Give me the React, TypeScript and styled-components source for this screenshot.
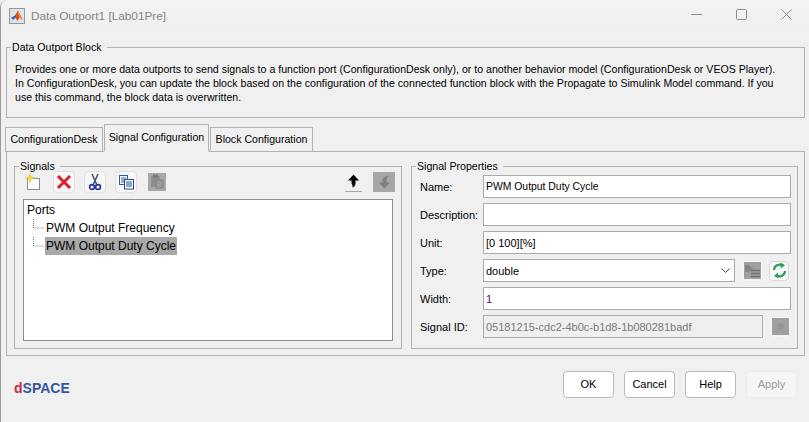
import React from "react";
import styled, { createGlobalStyle } from "styled-components";

const GlobalStyle = createGlobalStyle`
  html, body {
    margin: 0;
    padding: 0;
    background: #f0f0f0;
    overflow: hidden;
  }
  * {
    box-sizing: border-box;
  }
`;

const Win = styled.div`
  width: 809px;
  height: 422px;
  display: flex;
  flex-direction: column;
  overflow: hidden;
  background: #f0f0f0;
  border-left: 1px solid #9a9a9a;
  border-top-left-radius: 8px;
  font-family: "Liberation Sans", Arial, sans-serif;
  font-size: 10.6px;
  color: #000;
`;

const TitleBar = styled.div`
  height: 31px;
  flex: none;
  display: flex;
  align-items: center;
  padding-left: 8px;
  background: linear-gradient(#f3f3f3, #efefef);
`;

const TitleText = styled.span`
  flex: 1;
  margin-left: 6px;
  font-size: 11.8px;
  color: #858585;
`;

const WinButton = styled.div`
  width: 45px;
  height: 28px;
  align-self: flex-start;
  display: flex;
  align-items: center;
  justify-content: center;
`;

const Body = styled.div`
  flex: 1;
  display: flex;
  flex-direction: column;
  padding: 9px 4px 0 5px;
`;

const Group = styled.fieldset`
  margin: 0;
  min-width: 0;
  border: 1px solid #b2b2b2;
  padding: 0;
`;

const Legend = styled.legend`
  margin-left: 4px;
  padding: 0 5px 0 1px;
  height: 14px;
  line-height: 14px;
  font-size: 10.6px;
`;

const InfoText = styled.p`
  margin: 0;
  padding: 8px 8px 13px 8px;
  line-height: 14px;
  white-space: pre;
`;

const TabStrip = styled.div`
  display: flex;
  align-items: flex-end;
  height: 28px;
  margin: 6px 0 -1px -1px;
  gap: 1px;
  position: relative;
  z-index: 1;
`;

const Tab = styled.div<{ $active?: boolean; $w: number }>`
  width: ${(p) => p.$w}px;
  height: ${(p) => (p.$active ? 28 : 25)}px;
  display: flex;
  align-items: center;
  justify-content: center;
  white-space: nowrap;
  border: 1px solid #b2b2b2;
  border-bottom: 1px solid ${(p) => (p.$active ? "#f0f0f0" : "#b2b2b2")};
  background: #f0f0f0;
  padding-bottom: ${(p) => (p.$active ? 3 : 2)}px;
`;

const TabPanel = styled.div`
  height: 205px;
  border: 1px solid #b2b2b2;
  display: flex;
  gap: 9px;
  padding: 7px 6px 6px 7px;
`;

const SignalsGroup = styled(Group)`
  width: 388px;
  flex: none;
`;

const SignalsBody = styled.div`
  display: flex;
  flex-direction: column;
  padding: 0 8px;
`;

const Toolbar = styled.div`
  display: flex;
  align-items: center;
  height: 23px;
  margin: -3px 0 0 -1px;
  gap: 9px;
`;

const ToolButton = styled.div<{ $plain?: boolean }>`
  width: 22px;
  height: 22px;
  display: flex;
  align-items: center;
  justify-content: center;
  border-radius: 4px;
  background: ${(p) => (p.$plain ? "transparent" : "#f7f7f7")};
  border: 1px solid ${(p) => (p.$plain ? "transparent" : "#e0e0e0")};
`;

const MoveUp = styled(ToolButton)`
  margin-left: auto;
  border: 0;
  border-bottom: 1px solid #a8a8a8;
  border-radius: 0;
  background: transparent;
  width: 17px;
  height: 21px;
`;

const MoveDown = styled.div`
  width: 22px;
  height: 20px;
  margin-left: 2px;
  margin-right: -2px;
  display: flex;
  align-items: center;
  justify-content: center;
  background: #a6a6a6;
`;

const Tree = styled.div`
  height: 142px;
  margin-top: 6px;
  border: 1px solid #8f8f8f;
  background: #fff;
  padding: 1px 0 0 3px;
  font-size: 12px;
`;

const TreeRow = styled.div`
  height: 18px;
  display: flex;
  align-items: center;
`;

const Connector = styled.svg`
  width: 18px;
  height: 18px;
  flex: none;
`;

const TreeLabel = styled.span<{ $selected?: boolean }>`
  padding: 0 1px;
  line-height: 18px;
  background: ${(p) => (p.$selected ? "#a9a9a9" : "transparent")};
`;

const PropsGroup = styled(Group)`
  flex: 1;
`;

const FormGrid = styled.div`
  display: grid;
  grid-template-columns: 63px 1fr;
  grid-auto-rows: 23px;
  row-gap: 5px;
  align-items: center;
  margin-top: 2px;
  padding: 0 6px 0 8px;
`;

const Label = styled.label`
  font-size: 11px;
  white-space: nowrap;
`;

const Field = styled.input<{ $narrow?: boolean }>`
  width: 100%;
  height: 23px;
  border: 1px solid #a9a9b0;
  background: #fff;
  padding: 0 2px;
  font: ${(p) => (p.$narrow ? 10.4 : 11)}px "Liberation Sans", Arial, sans-serif;
  color: #000;
  outline: none;
  &:disabled {
    background: #efefef;
    color: #7a7a7a;
    -webkit-text-fill-color: #7a7a7a;
  }
`;

const WidthField = styled(Field)`
  color: #4b0f73;
`;

const FieldRow = styled.div`
  display: flex;
  align-items: center;
`;

const SelectBox = styled.div`
  width: 252px;
  flex: none;
  height: 23px;
  border: 1px solid #a9a9b0;
  background: #fff;
  display: flex;
  align-items: center;
  justify-content: space-between;
  padding: 0 4px 0 2px;
  font-size: 11px;
`;

const SmallIconButton = styled.div<{ $disabled?: boolean }>`
  width: 20px;
  height: 20px;
  flex: none;
  margin-left: 7px;
  display: flex;
  align-items: center;
  justify-content: center;
  border-radius: 4px;
  border: 1px solid ${(p) => (p.$disabled ? "#f6f6f6" : "#d8d8d8")};
  background: ${(p) => (p.$disabled ? "#f4f4f4" : "#f8f8f8")};
`;

const IdField = styled(Field)`
  width: 280px;
  flex: none;
`;

const Footer = styled.div`
  flex: 1;
  display: flex;
  align-items: center;
  padding: 0 8px 10px 8px;
  gap: 10px;
`;

const Logo = styled.div`
  font-size: 14px;
  font-weight: 700;
  color: #34589b;
  margin-right: auto;
  margin-top: 7px;
  span {
    color: #c8264e;
  }
`;

const Button = styled.button<{ $disabled?: boolean }>`
  width: 51px;
  height: 27px;
  padding: 0;
  border-radius: 4px;
  font: 11px "Liberation Sans", Arial, sans-serif;
  border: 1px solid ${(p) => (p.$disabled ? "#ececec" : "#bcbcbc")};
  background: ${(p) => (p.$disabled ? "#f6f6f6" : "#fff")};
  color: ${(p) => (p.$disabled ? "#9b9b9b" : "#000")};
`;

const MatlabIcon = () => (
  <svg width="16" height="16" viewBox="0 0 16 16">
    <rect x="0.5" y="0.5" width="15" height="15" fill="#dfe3e8" stroke="#8e969e" />
    <path d="M2 10 L6 7.5 L9 2.5 L13.5 12 L10.5 9.5 L8.5 13 L6 9.5 Z" fill="#d9531e" />
    <path d="M2 10 L6 7.5 L7.5 9 L6 9.8 L4.5 12 Z" fill="#2f6fa8" />
    <path d="M9 2.5 L13.5 12 L11 10 L9 6 Z" fill="#f08a24" />
  </svg>
);

const NewIcon = () => (
  <svg width="18" height="18" viewBox="0 0 18 18">
    <rect x="3.5" y="5.5" width="12" height="11" fill="#fff" stroke="#222" strokeDasharray="1 1" />
    <path d="M6 0.5 L7 3.8 L10.5 5 L7 6.2 L6 9.5 L5 6.2 L1.5 5 L5 3.8 Z" fill="#f4e23c" stroke="#d4ae00" strokeWidth="0.4" />
  </svg>
);

const DeleteIcon = () => (
  <svg width="16" height="16" viewBox="0 0 16 16">
    <path d="M3 3 L13 13 M13 3 L3 13" stroke="#d9222a" strokeWidth="3" strokeLinecap="square" />
  </svg>
);

const CutIcon = () => (
  <svg width="16" height="18" viewBox="0 0 16 18">
    <path d="M5 1 L9.5 11 M11 1 L6.5 11" stroke="#4a5468" strokeWidth="1.6" />
    <circle cx="5" cy="14" r="2.4" fill="none" stroke="#23389c" strokeWidth="1.7" />
    <circle cx="11" cy="14" r="2.4" fill="none" stroke="#23389c" strokeWidth="1.7" />
  </svg>
);

const CopyIcon = () => (
  <svg width="17" height="16" viewBox="0 0 17 16">
    <rect x="1.5" y="1.5" width="8" height="9" fill="#fff" stroke="#2c5ca8" />
    <path d="M3 4 H8 M3 6 H8 M3 8 H8" stroke="#2c5ca8" />
    <rect x="6.5" y="5.5" width="9" height="9.5" fill="#fff" stroke="#1f4a96" />
    <path d="M8 8 H14 M8 10 H14 M8 12 H14" stroke="#1f4a96" />
  </svg>
);

const PasteIcon = () => (
  <svg width="18" height="18" viewBox="0 0 18 18">
    <rect x="0" y="0" width="18" height="18" fill="#a8a8a8" />
    <rect x="3" y="3" width="9" height="11" fill="#8e8e8e" />
    <rect x="5" y="1.5" width="5" height="3" fill="#7a7a7a" />
    <rect x="8" y="7" width="7" height="8" fill="#9a9a9a" stroke="#808080" />
  </svg>
);

const UpArrow = () => (
  <svg width="13" height="14" viewBox="0 0 13 14">
    <path d="M6.5 0.5 L12 6.5 H8.5 V9 Q8.5 12 5.5 13.5 Q6 11 4.5 9.5 V6.5 H1 Z" fill="#000" />
  </svg>
);

const DownArrow = () => (
  <svg width="13" height="14" viewBox="0 0 13 14">
    <path d="M6.5 13.5 L12 7.5 H8.5 V5 Q8.5 2 11 0.5 Q6 1 4.5 4.5 V7.5 H1 Z" fill="#7f7f7f" />
  </svg>
);

const SelectChevron = () => (
  <svg width="9" height="5" viewBox="0 0 9 5">
    <path d="M0.5 0.5 L4.5 4.5 L8.5 0.5" fill="none" stroke="#444" />
  </svg>
);

const ListIcon = () => (
  <svg width="17" height="17" viewBox="0 0 17 17">
    <rect width="17" height="17" fill="#a0a0a0" />
    <path d="M1 3 H5 L9 7 L5 10 H1 Z" fill="#858585" />
    <path d="M7 8.5 H16 M7 11.5 H16 M7 14.5 H16" stroke="#707070" strokeWidth="1.6" />
  </svg>
);

const RefreshIcon = () => (
  <svg width="15" height="17" viewBox="0 0 15 17">
    <path d="M2 8 A5.5 5.5 0 0 1 10.5 3.5" fill="none" stroke="#2f9a60" strokeWidth="2.2" />
    <path d="M8.5 0.5 L13 3 L9 6.5 Z" fill="#2f9a60" />
    <path d="M13 9 A5.5 5.5 0 0 1 4.5 13.5" fill="none" stroke="#2f9a60" strokeWidth="2.2" />
    <path d="M6.5 16.5 L2 14 L6 10.5 Z" fill="#2f9a60" />
  </svg>
);

const GearIcon = () => (
  <svg width="17" height="17" viewBox="0 0 17 17">
    <rect width="17" height="17" fill="#a0a0a0" />
    <circle cx="8.5" cy="8.5" r="3" fill="#949494" stroke="#979797" strokeWidth="2" strokeDasharray="1.5 1" />
  </svg>
);

const info = `Provides one or more data outports to send signals to a function port (ConfigurationDesk only), or to another behavior model (ConfigurationDesk or VEOS Player).
In ConfigurationDesk, you can update the block based on the configuration of the connected function block with the Propagate to Simulink Model command. If you
use this command, the block data is overwritten.`;

const App = () => {
  return (
    <Win>
      <GlobalStyle />
      <TitleBar>
        <MatlabIcon />
        <TitleText>Data Outport1 [Lab01Pre]</TitleText>
        <WinButton>
          <svg width="11" height="11" viewBox="0 0 11 11">
            <path d="M0 5.5 H11" stroke="#8f8f8f" />
          </svg>
        </WinButton>
        <WinButton>
          <svg width="11" height="11" viewBox="0 0 11 11">
            <rect x="0.5" y="0.5" width="10" height="10" rx="1" fill="none" stroke="#8f8f8f" />
          </svg>
        </WinButton>
        <WinButton>
          <svg width="11" height="11" viewBox="0 0 11 11">
            <path d="M0.5 0.5 L10.5 10.5 M10.5 0.5 L0.5 10.5" stroke="#8f8f8f" />
          </svg>
        </WinButton>
      </TitleBar>

      <Body>
        <Group>
          <Legend>Data Outport Block</Legend>
          <InfoText>{info}</InfoText>
        </Group>

        <TabStrip>
          <Tab $w={98}>ConfigurationDesk</Tab>
          <Tab $w={105} $active>
            Signal Configuration
          </Tab>
          <Tab $w={103}>Block Configuration</Tab>
        </TabStrip>

        <TabPanel>
          <SignalsGroup>
            <Legend>Signals</Legend>
            <SignalsBody>
              <Toolbar>
                <ToolButton $plain>
                  <NewIcon />
                </ToolButton>
                <ToolButton>
                  <DeleteIcon />
                </ToolButton>
                <ToolButton>
                  <CutIcon />
                </ToolButton>
                <ToolButton>
                  <CopyIcon />
                </ToolButton>
                <ToolButton $plain>
                  <PasteIcon />
                </ToolButton>
                <MoveUp>
                  <UpArrow />
                </MoveUp>
                <MoveDown>
                  <DownArrow />
                </MoveDown>
              </Toolbar>
              <Tree>
                <TreeRow>Ports</TreeRow>
                <TreeRow>
                  <Connector viewBox="0 0 18 18">
                    <path d="M6.5 0 V9 H17" fill="none" stroke="#777" strokeDasharray="1 1" />
                  </Connector>
                  <TreeLabel>PWM Output Frequency</TreeLabel>
                </TreeRow>
                <TreeRow>
                  <Connector viewBox="0 0 18 18">
                    <path d="M6.5 0 V9 H17" fill="none" stroke="#777" strokeDasharray="1 1" />
                  </Connector>
                  <TreeLabel $selected>PWM Output Duty Cycle</TreeLabel>
                </TreeRow>
              </Tree>
            </SignalsBody>
          </SignalsGroup>

          <PropsGroup>
            <Legend>Signal Properties</Legend>
            <FormGrid>
              <Label>Name:</Label>
              <Field $narrow readOnly value="PWM Output Duty Cycle" />
              <Label>Description:</Label>
              <Field readOnly value="" />
              <Label>Unit:</Label>
              <Field readOnly value="[0 100][%]" />
              <Label>Type:</Label>
              <FieldRow>
                <SelectBox>
                  double
                  <SelectChevron />
                </SelectBox>
                <SmallIconButton $disabled>
                  <ListIcon />
                </SmallIconButton>
                <SmallIconButton>
                  <RefreshIcon />
                </SmallIconButton>
              </FieldRow>
              <Label>Width:</Label>
              <WidthField readOnly value="1" />
              <Label>Signal ID:</Label>
              <FieldRow>
                <IdField disabled value="05181215-cdc2-4b0c-b1d8-1b080281badf" />
                <SmallIconButton $disabled>
                  <GearIcon />
                </SmallIconButton>
              </FieldRow>
            </FormGrid>
          </PropsGroup>
        </TabPanel>

        <Footer>
          <Logo>
            <span>d</span>SPACE
          </Logo>
          <Button>OK</Button>
          <Button>Cancel</Button>
          <Button>Help</Button>
          <Button $disabled>Apply</Button>
        </Footer>
      </Body>
    </Win>
  );
};

export default App;
